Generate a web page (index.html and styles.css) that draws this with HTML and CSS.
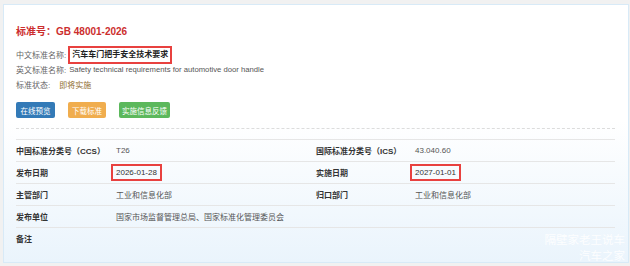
FILE: index.html
```html
<!DOCTYPE html>
<html lang="zh-CN">
<head>
<meta charset="utf-8">
<title>GB 48001-2026</title>
<link rel="stylesheet" href="styles.css">
</head>
<body>
<div class="card">
  <h1 class="title">标准号：GB 48001-2026</h1>
  <div class="info">
    <div class="line"><span class="key">中文标准名称:</span><span class="name">汽车车门把手安全技术要求</span></div>
    <div class="line"><span class="key">英文标准名称:</span><span class="val">Safety technical requirements for automotive door handle</span></div>
    <div class="line"><span class="key">标准状态:</span><span class="status">即将实施</span></div>
  </div>
  <div class="buttons">
    <span class="btn btn-blue">在线预览</span>
    <span class="btn btn-orange">下载标准</span>
    <span class="btn btn-green">实施信息反馈</span>
  </div>
  <div class="dash"></div>
  <div class="table">
    <div class="row">
      <div class="lbl">中国标准分类号（CCS）</div><div class="cell">T26</div>
      <div class="lbl">国际标准分类号（ICS）</div><div class="cell">43.040.60</div>
    </div>
    <div class="row">
      <div class="lbl">发布日期</div><div class="cell"><span class="boxed">2026-01-28</span></div>
      <div class="lbl">实施日期</div><div class="cell"><span class="boxed">2027-01-01</span></div>
    </div>
    <div class="row">
      <div class="lbl">主管部门</div><div class="cell">工业和信息化部</div>
      <div class="lbl">归口部门</div><div class="cell">工业和信息化部</div>
    </div>
    <div class="row">
      <div class="lbl">发布单位</div><div class="cell wide">国家市场监督管理总局、国家标准化管理委员会</div>
    </div>
    <div class="row">
      <div class="lbl">备注</div><div class="cell wide"></div>
    </div>
  </div>
  <div class="watermark">
    <div>隔壁家老王说车</div>
    <div>汽车之家</div>
  </div>
</div>
</body>
</html>
```
FILE: styles.css
```css
html, body {
  margin: 0;
  padding: 0;
}
body {
  background: #f1f1f1;
  font-family: "Liberation Sans", "Noto Sans CJK SC", sans-serif;
  font-size: 8px;
  color: #555;
  width: 630px;
  height: 266px;
  overflow: hidden;
}
.card {
  position: relative;
  box-sizing: border-box;
  margin: 4px 1px 0 3px;
  height: 259px;
  border: 1px solid #d8eaf7;
  background: linear-gradient(to bottom, #ffffff 0%, #ffffff 45%, #eaf4fc 100%);
  padding: 21px 12px 0 12px;
}
.title {
  margin: 0;
  font-size: 10px;
  line-height: 12px;
  font-weight: bold;
  color: #cc2e2e;
}
.info {
  margin-top: 9px;
}
.line {
  display: flex;
  align-items: center;
  height: 15px;
}
.key {
  color: #666;
  margin-right: 3px;
}
.name {
  font-weight: bold;
  color: #222;
  border: 2px solid #e8413f;
  padding: 1px 2px;
  line-height: 12px;
  margin-left: -1px;
}
.val {
  color: #555;
  font-size: 7.7px;
}
.status {
  color: #8f6d2e;
  margin-left: 6px;
}
.buttons {
  display: flex;
  gap: 13px;
  margin-top: 10px;
}
.btn {
  display: flex;
  align-items: center;
  justify-content: center;
  box-sizing: border-box;
  height: 16px;
  padding: 0;
  border-radius: 2px;
  color: #fff;
  font-size: 7.5px;
  white-space: nowrap;
}
.btn-blue { background: #337ab7; width: 39px; }
.btn-orange { background: #f0ad4e; width: 38px; }
.btn-green { background: #5cb85c; width: 51px; }
.dash {
  margin-top: 10px;
  border-top: 1px dashed #dcdcdc;
  width: 599px;
}
.table {
  margin-top: 10px;
  width: 599px;
}
.row {
  display: grid;
  grid-template-columns: 100px 200px 99px 200px;
  height: 22px;
  align-items: center;
  border-top: 1px solid #e6e6e6;
  box-sizing: border-box;
}
.lbl {
  font-weight: bold;
  color: #333;
}
.cell {
  color: #555;
}
.cell.wide {
  grid-column: 2 / 5;
}
.boxed {
  border: 2px solid #e8413f;
  padding: 2px 3px;
  margin-left: -5px;
  color: #333;
}
.watermark {
  position: absolute;
  right: 3px;
  bottom: -2px;
  text-align: right;
  color: rgba(255, 255, 255, 0.9);
  font-size: 11.5px;
  line-height: 16px;
}
```
